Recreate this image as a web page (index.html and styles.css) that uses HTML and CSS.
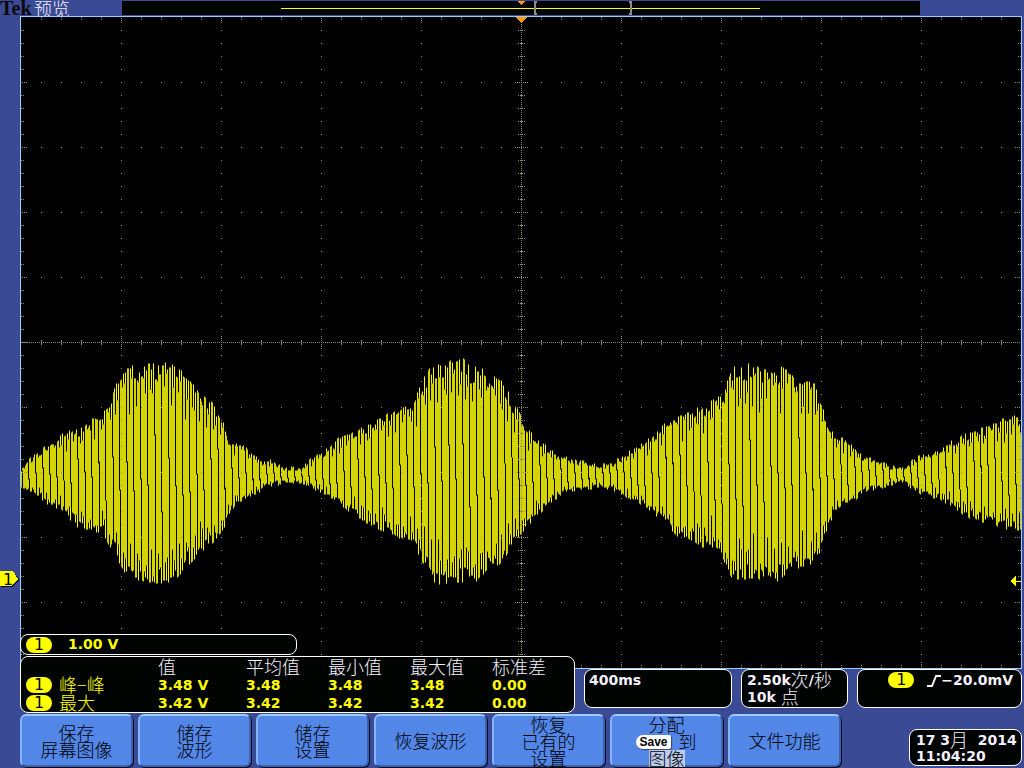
FILE: index.html
```html
<!DOCTYPE html>
<html lang="zh-CN">
<head>
    <meta charset="UTF-8">
    <meta name="viewport" content="width=device-width, initial-scale=1.0">
    <title>Tek 预览</title>
    <link rel="stylesheet" href="styles.css">
</head>
<body>
    <header class="topbar">
        <b class="logo">Tek</b>
        <span class="status">预览</span>
        <svg class="record" viewBox="0 0 798 14" shape-rendering="crispEdges">
            <rect class="record-back" width="798" height="14"/>
            <rect class="record-line" x="159" y="7" width="479" height="1"/>
            <path class="record-window" d="M412 0h3v2h-1v10h1v2h-3zM507 0h3v14h-3v-2h1v-10h-1z"/>
            <path class="orange" d="M396 0h7v1h-1v1h-1v1h-1v1h-1v-1h-1v-1h-1v-1h-1z"/>
        </svg>
    </header>

    <svg class="plot" viewBox="0 16 1022 653" shape-rendering="crispEdges">
        <rect class="plot-border" x="20" y="16" width="1002" height="653"/>
        <rect class="plot-back" x="21" y="17" width="1000" height="651"/>
        <path id="wave-body" class="wave-body"/>
        <path id="wave-bright" class="wave-bright"/>
        <path id="wave-tips" class="wave-tips"/>
        <path id="graticule" class="graticule"/>
        <path class="orange" d="M516 17h11v1h-1v1h-1v1h-1v1h-1v1h-1v1h-1v-1h-1v-1h-1v-1h-1v-1h-1v-1h-1z"/>
        <path class="marker-shadow" d="M1 572h13l5 7v1l-6 7h-12z"/>
        <path class="marker" d="M0 571h13l5 8-6 7h-12z"/>
        <text class="marker-text" x="3" y="585">1</text>
        <path class="marker" d="M1010 581l6-5v5h5v1h-5v5z"/>
    </svg>

    <section class="readouts">
        <div class="channel-area">
            <div class="box channel"><span class="badge">1</span><span>1.00 V</span></div>
            <div class="box measures">
                <table>
                    <thead>
                        <tr><th class="name"></th><th class="wide">值</th><th>平均值</th><th>最小值</th><th>最大值</th><th>标准差</th></tr>
                    </thead>
                    <tbody>
                        <tr><td><span class="badge">1</span><span class="cjk">峰−峰</span></td><td>3.48 V</td><td>3.48</td><td>3.48</td><td>3.48</td><td>0.00</td></tr>
                        <tr><td><span class="badge">1</span><span class="cjk">最大</span></td><td>3.42 V</td><td>3.42</td><td>3.42</td><td>3.42</td><td>0.00</td></tr>
                    </tbody>
                </table>
            </div>
        </div>
        <div class="box info timebase">400ms</div>
        <div class="box info sampling">2.50k<span class="cjk">次</span>/<span class="cjk">秒</span><br>10k <span class="cjk">点</span></div>
        <div class="box info trigger">
            <span class="badge">1</span>
            <svg class="edge" viewBox="0 0 14 12"><path d="M0 11h5l4-10h5"/></svg>
            <span>−20.0mV</span>
        </div>
    </section>

    <footer class="menu">
        <button type="button">保存<br>屏幕图像</button>
        <button type="button">储存<br>波形</button>
        <button type="button">储存<br>设置</button>
        <button type="button">恢复波形</button>
        <button type="button">恢复<br>已有的<br>设置</button>
        <button type="button">分配<br><span class="line"><kbd>Save</kbd>到</span><br><mark>图像</mark></button>
        <button type="button">文件功能</button>
        <time class="box clock" datetime="2014-03-17T11:04:20">17 3<span class="cjk">月</span>&nbsp; 2014<br>11:04:20</time>
    </footer>
    <script src="scope.js"></script>
</body>
</html>
```

FILE: styles.css
```css
*, *::after, *::before {
    box-sizing: border-box;
}

body {
    margin: 0;
    min-height: 100vh;
    background-color: #3a4a94;
    color: #f4f0ff;
    font: bold 14px/17px "DejaVu Sans", "Noto Sans CJK SC", sans-serif;
}

.topbar {
    display: flex;
    align-items: center;
    height: 16px;
    padding-right: 104px;
}

.logo {
    width: 34px;
    color: #0a0a0a;
    font: bold 20px/16px "Liberation Serif", serif;
}

.status {
    width: 88px;
    font: 300 18px/16px "Noto Sans CJK SC", sans-serif;
}

.record {
    flex: 1;
    min-width: 0;
}

.record-back {
    fill: #000400;
}

.record-line {
    fill: #ffff00;
}

.record-window {
    fill: #948a8c;
}

.orange {
    fill: #ff9a00;
}

.plot {
    display: block;
    width: calc(100% - 2px);
}

.plot-border {
    fill: #9ccbff;
}

.plot-back {
    fill: #000;
}

.wave-body {
    fill: #d4d400;
}

.wave-bright {
    fill: #ffff00;
}

.wave-tips {
    fill: #7b7b00;
}

.graticule {
    fill: #948a73;
}

.marker {
    fill: #ffff00;
}

.marker-shadow {
    fill: #080c20;
}

.marker-text {
    font: 16px "DejaVu Sans", sans-serif;
}

.cjk {
    font: 300 18px/0 "Noto Sans CJK SC", sans-serif;
}

.box {
    border: 1px solid #fff;
    border-radius: 8px;
    background-color: #000400;
}

.badge {
    display: inline-block;
    width: 26px;
    height: 16px;
    border-radius: 8px;
    background-color: #ffff00;
    color: #000;
    font-weight: normal;
    font-size: 16px;
    line-height: 16px;
    text-align: center;
}

/* the channel boxes cover the lower edge of the plot */
.readouts {
    position: relative;
    display: flex;
    gap: 9px;
    align-items: flex-end;
    margin-top: -35px;
    padding: 0 2px 0 20px;
}

.channel-area {
    flex: 0 1 555px;
    color: #ffff00;
}

.channel {
    display: flex;
    gap: 16px;
    align-items: center;
    width: 277px;
    height: 21px;
    margin-bottom: 1px;
    padding-left: 5px;
}

.measures {
    height: 57px;
    padding-left: 5px;
}

.measures table {
    width: 100%;
    border-collapse: collapse;
    table-layout: fixed;
}

.measures th {
    width: 82px;
    height: 19px;
    padding: 0;
    color: #f4f0ff;
    font: 300 18px/19px "Noto Sans CJK SC", sans-serif;
    text-align: left;
}

.measures .name {
    width: 132px;
}

.measures .wide {
    width: 88px;
}

.measures td {
    height: 18px;
    padding: 0;
    line-height: 18px;
    white-space: nowrap;
}

.measures .badge {
    margin: 1px 7px 0 0;
    vertical-align: top;
}

.info {
    height: 39px;
    margin-bottom: 5px;
    padding: 2px 4px;
    white-space: nowrap;
}

.cjk {
    vertical-align: -2px;
}

.timebase {
    flex: 0 1 148px;
}

.sampling {
    flex: 0 0 107px;
    padding-left: 5px;
}

.trigger {
    display: flex;
    flex: 1;
    justify-content: flex-end;
    align-items: flex-start;
    padding-right: 8px;
}

.trigger .badge {
    margin-right: 13px;
}

.edge {
    width: 14px;
    height: 12px;
    margin-top: 3px;
    fill: none;
    stroke: #f4f0ff;
    stroke-width: 2;
}

.menu {
    display: flex;
    gap: 5px;
    align-items: flex-end;
    padding: 1px 2px 0 20px;
}

.menu button {
    flex: 0 1 113px;
    height: 53px;
    margin-bottom: 1px;
    padding: 0;
    border: 2px solid;
    border-color: #9ccbff #3961ad #3961ad #84b6ff;
    border-radius: 6px;
    background-color: #5286e7;
    box-shadow: 1px 1px #000820;
    color: #000;
    font: 300 18px/17px "Noto Sans CJK SC", sans-serif;
}

.line {
    display: inline-flex;
    gap: 8px;
    align-items: center;
    height: 17px;
    vertical-align: top;
}

.menu kbd {
    padding: 0 3px;
    border-radius: 7px 2px 2px 7px;
    background-color: #fff;
    box-shadow: 1px 1px 1px #39496b;
    font: bold 12px/14px "Liberation Sans", sans-serif;
}

.menu mark {
    display: inline-block;
    height: 17px;
    background-color: #bdcbef;
    color: #000;
    vertical-align: top;
}

.clock {
    width: 113px;
    height: 37px;
    margin: 0 0 2px auto;
    padding: 2px 0 0 6px;
    line-height: 16px;
    white-space: nowrap;
}
```

FILE: scope.js
```js
const d = document,
    CENTER = 475;

// outline of the modulated signal: x, y pairs
const TOP = [[21,466],[33,455],[47,443],[61,433],[70,430],[81,427],[88,421],[100,414],[110,403],[115,383],[125,370],[133,365],[138,363],[170,363],[177,368],[190,378],[200,394],[207,397],[217,409],[223,420],[228,440],[243,441],[250,453],[260,459],[270,460],[280,465],[290,467],[303,465],[313,457],[327,448],[340,436],[353,433],[365,425],[383,415],[398,409],[413,399],[422,381],[432,363],[438,361],[462,358],[470,366],[483,368],[490,373],[503,382],[510,396],[520,412],[525,427],[537,438],[543,443],[553,451],[567,457],[583,461],[600,465],[613,461],[623,456],[633,448],[647,440],[660,428],[673,415],[683,414],[697,408],[710,401],[723,391],[732,368],[748,363],[763,366],[778,371],[783,363],[790,368],[797,383],[810,381],[814,383],[820,404],[825,414],[830,423],[833,436],[847,438],[857,453],[873,457],[887,464],[903,467],[917,456],[933,451],[947,443],[960,436],[980,428],[998,418],[1021,415]],
    BOTTOM = [[21,488],[30,493],[40,499],[50,507],[67,517],[80,530],[90,530],[103,535],[112,551],[120,567],[127,580],[135,581],[147,584],[163,585],[172,580],[180,575],[190,563],[202,550],[212,548],[220,540],[228,515],[237,504],[250,498],[263,489],[277,485],[303,485],[317,491],[333,502],[350,512],[363,521],[380,530],[403,540],[413,541],[420,560],[428,572],[433,583],[440,585],[453,582],[477,582],[487,570],[500,565],[510,553],[517,541],[527,527],[537,514],[543,511],[553,501],[567,493],[580,491],[600,487],[613,492],[627,498],[647,509],[663,522],[677,536],[693,541],[702,548],[710,546],[720,555],[733,583],[742,580],[753,578],[763,579],[773,584],[780,581],[793,569],[810,569],[820,553],[827,535],[833,515],[847,505],[857,499],[870,491],[887,487],[903,484],[917,493],[937,499],[950,506],[963,517],[983,522],[1000,530],[1021,531]];

function at(points, x) {
    let i = 1;
    while (i < points.length - 1 && points[i][0] < x) i++;
    const [x0, y0] = points[i - 1],
        [x1, y1] = points[i];
    return y0 + (y1 - y0) * (x - x0) / (x1 - x0);
}

// repeatable noise from 0 to 1
function noise(n) {
    const v = Math.sin(n * 127.1 + 11.7) * 43758.5453;
    return v - Math.floor(v);
}

// three cycles of the carrier take seven columns: the peak that each column
// belongs to, and the columns that fall between two peaks
const TOP_PEAK = [0, 0, 0, 1, 1, 2, 2],
    BOTTOM_PEAK = [2, 0, 0, 0, 1, 1, 2];

function column(x) {
    const group = Math.floor((x - 21) / 7),
        k = (x - 21) % 7,
        high = at(TOP, x) - CENTER,
        low = at(BOTTOM, x) - CENTER,
        topNoise = noise(group * 3 + TOP_PEAK[k]),
        bottomNoise = noise(group * 3 + BOTTOM_PEAK[k] + 5000),
        middle = (noise(group + 900) - 0.5) * 0.8;
    let top = high * (1 - 0.13 * topNoise * topNoise) + 4 * topNoise - 1,
        bottom = low * (1 - 0.13 * bottomNoise * bottomNoise) - 4 * bottomNoise + 1;

    if (k === 0) top = low * middle;
    if (k === 1) bottom = low * middle;
    if (k === 3) top = high * (0.55 + 0.35 * noise(group + 100));
    if (k === 5) top = high * (0.7 + 0.25 * noise(group + 200));
    if (k === 4) bottom = low * (0.55 + 0.35 * noise(group + 300));
    if (k === 6) bottom = low * (0.7 + 0.25 * noise(group + 400));
    return [Math.round(CENTER + top), Math.round(CENTER + bottom)];
}

function drawWave() {
    const cols = [];
    for (let x = 21; x < 1021; x++) cols.push(column(x));

    let body = '', bright = '', tips = '';
    cols.forEach(([top, bottom], i) => {
        const x = 21 + i,
            left = cols[i - 1] || [top, bottom],
            right = cols[i + 1] || [top, bottom],
            freeTop = Math.min(left[0], right[0], bottom),
            freeBottom = Math.max(left[1], right[1], top);
        body += `M${x} ${top}h1V${bottom}h-1z`;
        // a line with nothing beside it is drawn at full brightness
        const loneTop = Math.min(bottom, left[0], right[0]),
            loneBottom = Math.max(top, left[1], right[1]);
        if (loneTop > top) bright += `M${x} ${top}h1V${freeTop}h-1z`;
        if (loneBottom < bottom) bright += `M${x} ${freeBottom}h1V${bottom}h-1z`;
        tips += `M${x} ${top}h1v1h-1zM${x} ${bottom - 1}h1v1h-1z`;
    });
    d.getElementById('wave-body').setAttribute('d', body);
    d.getElementById('wave-bright').setAttribute('d', bright);
    d.getElementById('wave-tips').setAttribute('d', tips);
}

function drawGraticule() {
    let path = '';
    const dot = (x, y) => path += `M${x} ${y}h1v1h-1z`;

    // dotted division lines
    for (let y = 82; y < 667; y += 65)
        for (let x = 41; x < 1021; x += 20) dot(x, y);
    for (let x = 121; x < 1021; x += 100)
        for (let y = 30; y < 667; y += 13) dot(x, y);

    // centre axes
    for (let x = 21; x < 1021; x += 2) dot(x, 342);
    for (let y = 18; y < 667; y += 2) dot(521, y);
    for (let x = 41; x < 1021; x += 20) {
        const ys = (x - 21) % 100 ? [340, 341, 343, 344] : [336, 338, 340, 344, 346, 348];
        ys.forEach(y => dot(x, y));
        ((x - 21) % 100 ? [17, 19, 665, 667] : [18, 20, 22, 662, 664, 666]).forEach(y => dot(x, y));
    }
    for (let y = 30; y < 667; y += 13) {
        const major = (y - 17) % 65 === 0;
        (major ? [515, 517, 519, 523, 525, 527] : [518, 520, 522, 524]).forEach(x => dot(x, y));
        (major ? [22, 24, 26, 1015, 1017, 1019] : [21, 23, 1018, 1020]).forEach(x => dot(x, y));
    }
    d.getElementById('graticule').setAttribute('d', path);
}

drawWave();
drawGraticule();
```
